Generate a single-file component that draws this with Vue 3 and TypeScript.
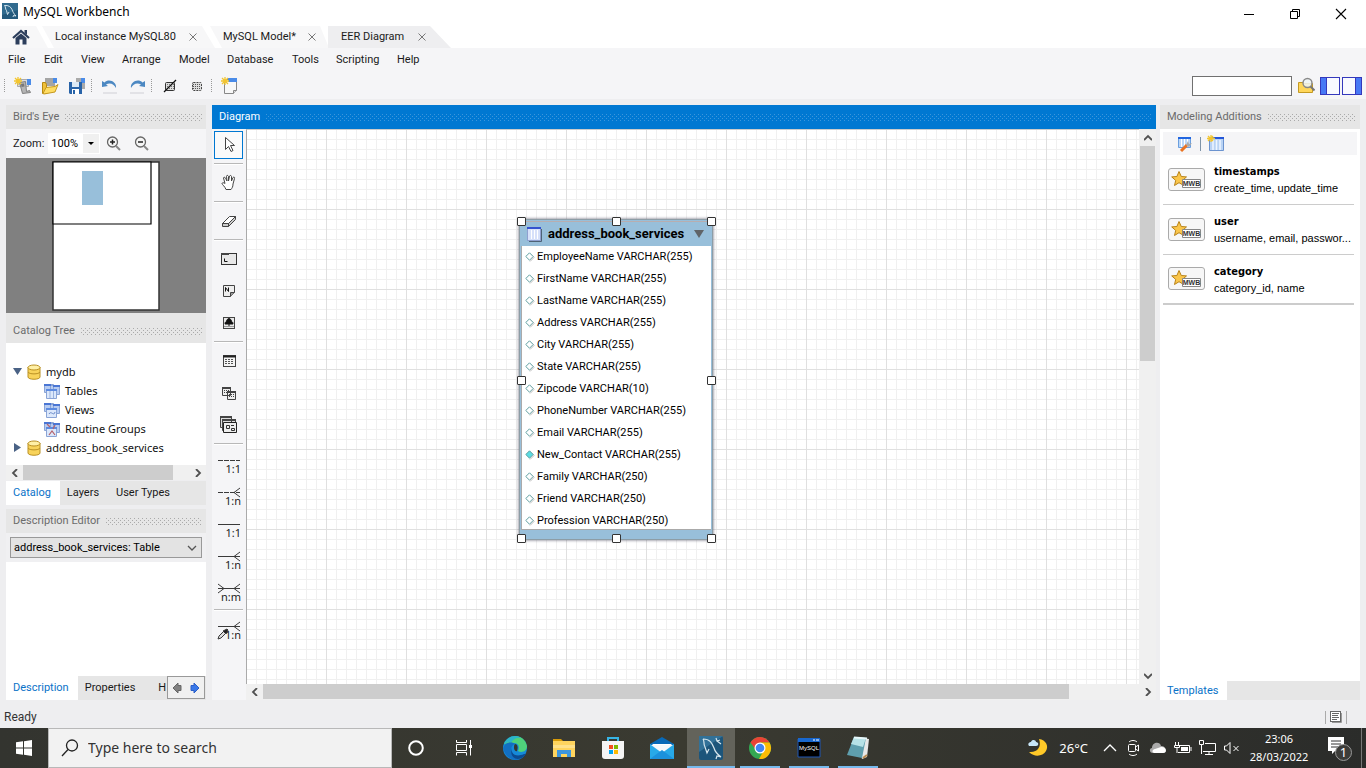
<script setup lang="ts">
import { ref } from 'vue'

interface Column { name: string; type: string; filled?: boolean }
interface Addition { title: string; detail: string }
type Tool = { id: string; label: string; group?: boolean; relation?: string; dashed?: boolean; left?: boolean; right?: boolean; pick?: boolean }

const menus: string[] = ['File', 'Edit', 'View', 'Arrange', 'Model', 'Database', 'Tools', 'Scripting', 'Help']

const columns: Column[] = [
  { name: 'EmployeeName', type: 'VARCHAR(255)' },
  { name: 'FirstName', type: 'VARCHAR(255)' },
  { name: 'LastName', type: 'VARCHAR(255)' },
  { name: 'Address', type: 'VARCHAR(255)' },
  { name: 'City', type: 'VARCHAR(255)' },
  { name: 'State', type: 'VARCHAR(255)' },
  { name: 'Zipcode', type: 'VARCHAR(10)' },
  { name: 'PhoneNumber', type: 'VARCHAR(255)' },
  { name: 'Email', type: 'VARCHAR(255)' },
  { name: 'New_Contact', type: 'VARCHAR(255)', filled: true },
  { name: 'Family', type: 'VARCHAR(250)' },
  { name: 'Friend', type: 'VARCHAR(250)' },
  { name: 'Profession', type: 'VARCHAR(250)' },
]

const additions: Addition[] = [
  { title: 'timestamps', detail: 'create_time, update_time' },
  { title: 'user', detail: 'username, email, passwor...' },
  { title: 'category', detail: 'category_id, name' },
]

const tools: Tool[] = [
  { id: 'select', label: 'Select' },
  { id: 'hand', label: 'Pan', group: true },
  { id: 'eraser', label: 'Delete', group: true },
  { id: 'layer', label: 'Layer', group: true },
  { id: 'note', label: 'Note' },
  { id: 'image', label: 'Image' },
  { id: 'table', label: 'Table', group: true },
  { id: 'view', label: 'View' },
  { id: 'routine', label: 'Routine group' },
  { id: 'r1', label: 'One to one', group: true, relation: '1:1', dashed: true },
  { id: 'r2', label: 'One to many', relation: '1:n', dashed: true, right: true },
  { id: 'r3', label: 'Identifying one to one', relation: '1:1' },
  { id: 'r4', label: 'Identifying one to many', relation: '1:n', right: true },
  { id: 'r5', label: 'Many to many', relation: 'n:m', left: true, right: true },
  { id: 'r6', label: 'Relation from columns', group: true, relation: '1:n', right: true, pick: true },
]

const handles: string[] = ['nw', 'n', 'ne', 'w', 'e', 'sw', 's', 'se']
const activeTool = ref<string>('select')
const query = ref<string>('')
const taskQuery = ref<string>('')
</script>

<template>
  <div class="app">
    <header class="titlebar">
      <svg class="logo" width="16" height="16" viewBox="0 0 32 32"><rect width="32" height="32" fill="#24597c"/><path d="M0 0h32v14L0 24z" fill="#3d7da2" opacity=".5"/><path d="M5 5c8-1 13 3 15 8 2 5 3 8 8 13l-5-1-1 3M5 5c3 3 1 7 4 10l2 8 3-5" fill="none" stroke="#e4f0f6" stroke-width="1.800"/></svg>
      <h1>MySQL Workbench</h1>
      <div class="window-buttons">
        <button aria-label="Minimize"><svg width="12" height="12"><path d="M1 6.500h10" stroke="#000"/></svg></button>
        <button aria-label="Restore"><svg width="12" height="12" fill="none" stroke="#000"><path d="M1.500 3.500h7v7h-7zM3.500 3.500v-2h7v7h-2"/></svg></button>
        <button aria-label="Close"><svg width="12" height="12"><path d="M1 1l10 10M11 1L1 11" stroke="#000" stroke-width="1.100"/></svg></button>
      </div>
    </header>

    <nav class="tabs" aria-label="Documents">
      <div class="tab home"><button aria-label="Home"><svg width="18" height="16" viewBox="0 0 18 16"><path d="M1 9l8-7 8 7" fill="none" stroke="#2c3e5c" stroke-width="2.200"/><path d="M12.500 1H15v5l-2.500-2zM3.500 9L9 4.500 14.500 9v6.500h-4v-5h-3v5h-4z" fill="#2c3e5c"/></svg></button></div>
      <div class="tab local"><button>Local instance MySQL80</button><button class="close" aria-label="Close tab"><svg width="8" height="8"><path d="M.5.5l7 7M7.500.5l-7 7" stroke="#777"/></svg></button></div>
      <div class="tab model"><button>MySQL Model*</button><button class="close" aria-label="Close tab"><svg width="8" height="8"><path d="M.5.5l7 7M7.500.5l-7 7" stroke="#777"/></svg></button></div>
      <div class="tab eer"><button>EER Diagram</button><button class="close" aria-label="Close tab"><svg width="8" height="8"><path d="M.5.5l7 7M7.500.5l-7 7" stroke="#777"/></svg></button></div>
    </nav>

    <nav class="menubar" aria-label="Main menu">
      <button v-for="m in menus" :key="m">{{ m }}</button>
    </nav>

    <div class="toolbar">
      <i class="grip"></i>
      <button aria-label="New model"><svg width="18" height="18"><path d="M3.500 2.500h11v7h-11z" fill="#ddd" stroke="#aaa"/><path d="M13 2h4v6h-4z" fill="#4a8be8"/><path d="M5.500 5.500l6-1 1 10 3-1 1 2-8 1z" fill="#b5b5b5" stroke="#808080"/><path d="M7 7l3-.5.500 3-3 .5z" fill="#777"/><path d="M4 0v8M0 4h8M1 1l6 6M7 1L1 7" stroke="#f3c52e" stroke-width="1.300"/></svg></button>
      <button aria-label="Open model"><svg width="18" height="18"><path d="M4 1h10v8H4z" fill="#a5a5a5"/><path d="M12 1h4v5h-4z" fill="#4a8be8"/><path d="M1.500 5.500h3l1 2v9h-4z" fill="#f0c03a" stroke="#b78910"/><path d="M2 16.500l3-6 9-1 3-2-3 7.500-11 2z" fill="#ffdd63" stroke="#c5981f"/></svg></button>
      <button aria-label="Save model"><svg width="18" height="18"><path d="M8 1h9v11H8z" fill="#aaa"/><path d="M13 1h4v5h-4z" fill="#4a8be8"/><path d="M1 5h13v12H2l-1-1z" fill="#2863a8"/><path d="M4 5h7v5H4z" fill="#dce9f5"/><path d="M4 12h7v5H4z" fill="#fff"/><path d="M5 13h2v4H5z" fill="#2863a8"/></svg></button>
      <i class="sep"></i>
      <button aria-label="Undo"><svg width="18" height="18"><path d="M2 16h14" stroke="#e2e2e6" stroke-width="2"/><path d="M1 4v6l6-1-2-1.500C9 5 13 7 15 11 16 5 8 1 3.500 5.500z" fill="#4c88c2"/></svg></button>
      <button aria-label="Redo"><svg width="18" height="18"><path d="M2 16h14" stroke="#e2e2e6" stroke-width="2"/><path d="M17 4v6l-6-1 2-1.500C9 5 5 7 3 11 2 5 10 1 14.500 5.500z" fill="#4c88c2"/></svg></button>
      <i class="sep"></i>
      <button aria-label="Toggle grid"><svg width="14" height="14"><rect x="2.500" y="3.500" width="9" height="8" rx="1" fill="#ddd" stroke="#333"/><path d="M4 5.500h7M4 7.500h7M4 9.500h7" stroke="#777" stroke-dasharray="1 1"/><path d="M1 13L13 1" stroke="#111" stroke-width="1.200"/></svg></button>
      <button aria-label="Align to grid"><svg width="14" height="14"><rect x="2.500" y="3.500" width="9" height="8" rx="1" fill="#ddd" stroke="#444" stroke-dasharray="2 1"/><path d="M3 5.500h8M3 7.500h8M3 9.500h8" stroke="#555" stroke-dasharray="1 1"/></svg></button>
      <i class="sep"></i>
      <button aria-label="New diagram"><svg width="18" height="18"><path d="M3.500 2.500h12v11l-3 3h-9z" fill="#f8f8f8" stroke="#888"/><path d="M7 1h9v4H7z" fill="#4a8be8"/><path d="M12.500 16.500v-3h3" fill="#ddd" stroke="#888"/><path d="M4 0v8M0 4h8M1 1l6 6M7 1L1 7" stroke="#f3c52e" stroke-width="1.300"/></svg></button>
      <input v-model="query" class="search" type="text" aria-label="Search">
      <button aria-label="Find"><svg width="18" height="18"><path d="M1.500 5.500h5l1 1h8v9h-14z" fill="#ffd65a" stroke="#c49a23"/><circle cx="10.500" cy="6" r="4.500" fill="#eef4f6" fill-opacity=".85" stroke="#888" stroke-width="1.400"/><path d="M13.500 9.500l4 4" stroke="#777" stroke-width="2"/></svg></button>
      <button class="side" aria-label="Toggle left sidebar"><svg width="20" height="18"><rect x=".5" y=".5" width="19" height="17" fill="#f8f9ff" stroke="#3438bc"/><path d="M1 1h5v16H1z" fill="#4778f5"/><path d="M6.500 1v16" stroke="#3438bc"/></svg></button>
      <button class="side" aria-label="Toggle right sidebar"><svg width="20" height="18"><rect x=".5" y=".5" width="19" height="17" fill="#f8f9ff" stroke="#3438bc"/><path d="M14 1h5v16h-5z" fill="#4778f5"/><path d="M13.500 1v16" stroke="#3438bc"/></svg></button>
    </div>

    <main class="workspace">
      <aside class="left">
        <h2 class="head">Bird's Eye<i class="dots"></i></h2>
        <div class="zoom">
          <label for="zoom">Zoom:</label>
          <span class="combo">
            <select id="zoom"><option>100%</option><option>50%</option></select>
            <svg width="16" height="19"><path d="M0 0h16v19H0z" fill="#f0f0f0"/><path d="M5 8h6l-3 3z" fill="#000"/></svg>
          </span>
          <button aria-label="Zoom in"><svg width="16" height="16"><circle cx="6.500" cy="6" r="5" fill="#f6f6f6" stroke="#666" stroke-width="1.300"/><path d="M4 6h5M6.500 3.500v5" stroke="#222" stroke-width="1.500"/><path d="M10 10l4 4" stroke="#888" stroke-width="2"/></svg></button>
          <button aria-label="Zoom out"><svg width="16" height="16"><circle cx="6.500" cy="6" r="5" fill="#f6f6f6" stroke="#666" stroke-width="1.300"/><path d="M4 6h5" stroke="#222" stroke-width="1.500"/><path d="M10 10l4 4" stroke="#888" stroke-width="2"/></svg></button>
        </div>
        <div class="overview">
          <svg width="108" height="150"><rect x="1" y="1" width="106" height="148" fill="#fff" stroke="#333" stroke-width="1.500"/><path d="M1 1h98v62H1z" fill="#fff" stroke="#000" stroke-width="1.200"/><rect x="30" y="10" width="21" height="34" fill="#98bfda"/></svg>
        </div>
        <h2 class="head second">Catalog Tree<i class="dots"></i></h2>
        <ul class="tree">
          <li><svg width="11" height="9"><path d="M1 1h9l-4.500 7z" fill="#4a6285"/></svg><svg class="db" width="14" height="16"><path d="M1 3v10c0 3 12 3 12 0V3" fill="#f8d35a" stroke="#ba9125"/><ellipse cx="7" cy="3.500" rx="6" ry="2.500" fill="#fff0a6" stroke="#ba9125"/><path d="M1 8c1 2.500 11 2.500 12 0" fill="none" stroke="#ba9125"/></svg>mydb</li>
          <li v-for="n in ['Tables', 'Views', 'Routine Groups']" :key="n" class="child">
            <svg width="16" height="16"><path d="M.5 1.500h9v8h-9zM6.500 2.500h9v9h-9z" fill="#b7ccf2" stroke="#8aa4d6"/><path d="M0 1h7v2H0zM9 2h7v2H9z" fill="#4a76d4"/><path d="M2.500 7.500h10v8h-10z" fill="#dce8fb" stroke="#8aa4d6"/><path d="M2 6h11v2H2z" fill="#5d8be0"/><path v-if="n === 'Tables'" d="M6 8v7M9.500 8v7" stroke="#9ab3df"/><path v-else-if="n === 'Views'" d="M5 12c2-4 5 3 6-2" fill="none" stroke="#6889c9"/><path v-else d="M3 3l3 3M11 4l-2 4M5 14l3-4 3 4" fill="none" stroke="#b5616b" stroke-width="1.200"/></svg>{{ n }}
          </li>
          <li><svg width="11" height="11"><path d="M2 1v9l7-4.500z" fill="#4a6285"/></svg><svg class="db" width="14" height="16"><path d="M1 3v10c0 3 12 3 12 0V3" fill="#f8d35a" stroke="#ba9125"/><ellipse cx="7" cy="3.500" rx="6" ry="2.500" fill="#fff0a6" stroke="#ba9125"/><path d="M1 8c1 2.500 11 2.500 12 0" fill="none" stroke="#ba9125"/></svg>address_book_services</li>
        </ul>
        <div class="hscroll"><button aria-label="Scroll left"><svg width="8" height="8"><path d="M6 0L2 4l4 4" fill="none" stroke="#505050" stroke-width="1.800"/></svg></button><div class="track"><i class="thumb"></i></div><button aria-label="Scroll right"><svg width="8" height="8"><path d="M2 0l4 4-4 4" fill="none" stroke="#505050" stroke-width="1.800"/></svg></button></div>
        <div class="panel-tabs"><button class="on">Catalog</button><button>Layers</button><button>User Types</button></div>
        <h2 class="head third">Description Editor<i class="dots"></i></h2>
        <div class="object-pick">
          <span class="combo wide"><select aria-label="Selected object"><option>address_book_services: Table</option></select><svg width="18" height="10"><path d="M5 3l4 4 4-4" fill="none" stroke="#555" stroke-width="1.300"/></svg></span>
        </div>
        <textarea class="description" aria-label="Description"></textarea>
        <div class="panel-tabs bottom"><button class="on">Description</button><button>Properties</button><button class="cut">H</button>
          <span class="pager"><button aria-label="Previous tab"><svg width="10" height="12"><path d="M9 3.500v5H6V11L1 6l5-5v2.500z" fill="#808080" stroke="#666"/></svg></button><button aria-label="Next tab"><svg width="10" height="12"><path d="M1 3.500v5h3V11l5-5-5-5v2.500z" fill="#3877e8" stroke="#2b5fc7"/></svg></button></span>
        </div>
      </aside>

      <section class="center">
        <h2 class="head blue">Diagram<i class="dots"></i></h2>
        <div class="toolbox">
          <template v-for="t in tools" :key="t.id">
            <hr v-if="t.group">
            <button :class="{ active: activeTool === t.id }" :aria-label="t.label" @click="activeTool = t.id">
              <svg v-if="t.relation" width="30" height="30" viewBox="0 0 30 30" fill="none" stroke="#3a3a3a">
                <path d="M4 12.500h22" :stroke-dasharray="t.dashed ? '5 1' : undefined"/>
                <path v-if="t.right" d="M26 8l-6 4.500 6 4.500"/><path v-if="t.left" d="M4 8l6 4.500L4 17"/>
                <path v-if="t.pick" d="M4 25l1-3 5-5 2 2-5 5z" fill="#ddd"/><path v-if="t.pick" d="M9 17l3 3 2-4-1-1z" fill="#222"/>
                <text x="27" y="25" text-anchor="end" fill="#1c1c1c" stroke="none">{{ t.relation }}</text>
              </svg>
              <svg v-else width="20" height="20" viewBox="0 0 20 20" fill="none" stroke="#444">
                <path v-if="t.id === 'select'" d="M6.500 2.500v12l3-3 2.500 5 2-1-2.500-5h4z" fill="#fff"/>
                <path v-else-if="t.id === 'hand'" d="M7 16.500c-1-3-4-5-4-6s2-1 3 0L4.500 5c0-1 1.500-1 2 0L8 8l-.5-4.500c0-1.500 1.500-1.500 2 0V8l1-5c.5-1 2-.5 2 .5V8l1.500-3.500c1-1 2 0 1.500 1L14 11c0 3-1 4-2 5.500z" fill="#fff"/>
                <g v-else-if="t.id === 'eraser'"><path d="M3.500 12.500l7-7h6l-5 7z" fill="#fff"/><path d="M3.500 12.500v3h6l7-7v-3l-7 7z" fill="#ccc"/><path d="M3.500 12.500h6v3" /></g>
                <g v-else-if="t.id === 'layer'"><rect x="2.500" y="4.500" width="15" height="11" fill="#e8e8e8" stroke="#333"/><path d="M2 5h8" stroke-width="2"/><path d="M5.500 9.500v3h3" stroke="#111"/></g>
                <g v-else-if="t.id === 'note'"><path d="M4.500 4.500h11v7l-4 4h-7z" fill="#eee"/><path d="M11.500 15.500v-4h4" fill="#999"/><path d="M6.500 10.500v-4l3 4v-4" stroke="#111"/></g>
                <g v-else-if="t.id === 'image'"><rect x="4.500" y="4.500" width="11" height="11" fill="#e8e8e8"/><path d="M10 14v-3M6 11c0-3 2-2 2-4 1-2 3-2 4 0 0 2 2 1 2 4z" fill="#111" stroke="#111"/><path d="M5 13.500h10" stroke="#999"/></g>
                <g v-else-if="t.id === 'table'"><rect x="4.500" y="4.500" width="12" height="11" fill="#f5f5f5"/><path d="M4 5.500h13" stroke="#222" stroke-width="2"/><path d="M6 8.500h9M6 10.500h9M6 12.500h9" stroke-dasharray="2 1" stroke="#555"/></g>
                <g v-else-if="t.id === 'view'"><path d="M3.500 4.500h8v8h-8zM8.500 8.500h8v8h-8z" fill="#eee"/><path d="M3 5h9M8 9h9" stroke-width="2"/><path d="M5 7.500h6M5 9.500h3M10 11.500h6M10 13.500h6" stroke-dasharray="1 1"/></g>
                <g v-else><path d="M1.500 1.500h11v11h-11zM3.500 4.500h13v11h-13z" fill="#ddd"/><path d="M1 2h12M3 5h14" stroke-width="2"/><path d="M4.500 7.500h13v10h-13z" fill="#eee" stroke="#222"/><path d="M7.500 10.500h3v3h-3zM12.500 13.500h3v2h-3zM12 10.500h3" stroke="#333"/></g>
              </svg>
            </button>
          </template>
        </div>
        <div class="canvas">
          <article class="entity">
            <header><svg width="15" height="15"><rect x=".5" y=".5" width="13" height="13" fill="#d7e1fa" stroke="#8fa0d0"/><path d="M0 0h14v2H0z" fill="#3453cf"/><path d="M4.500 3v9M7.500 3v9M10.500 3v9" stroke="#fff"/><path d="M14.500 2v12.500H2" stroke="#4e6276" fill="none"/></svg><strong>address_book_services</strong><svg class="fold" width="10" height="8"><path d="M0 0h10L5 8z" fill="#606468"/></svg></header>
            <ul>
              <li v-for="c in columns" :key="c.name"><svg width="10" height="10"><path d="M5 1.500l4 4-4 4" fill="none" stroke="#bbb"/><path d="M4.500.8l3.700 3.700-3.700 3.700L.8 4.500z" :fill="c.filled ? '#5bdbe2' : '#fff'" stroke="#5f9ea0"/></svg>{{ c.name }} {{ c.type }}</li>
            </ul>
            <i v-for="h in handles" :key="h" class="handle" :class="h"></i>
          </article>
        </div>
        <div class="vscroll"><button aria-label="Scroll up"><svg width="8" height="8"><path d="M0 6l4-4 4 4" fill="none" stroke="#505050" stroke-width="1.800"/></svg></button><div class="track"><i class="thumb"></i></div><button aria-label="Scroll down"><svg width="8" height="8"><path d="M0 2l4 4 4-4" fill="none" stroke="#505050" stroke-width="1.800"/></svg></button></div>
        <div class="hscroll"><button aria-label="Scroll left"><svg width="8" height="8"><path d="M6 0L2 4l4 4" fill="none" stroke="#505050" stroke-width="1.800"/></svg></button><div class="track"><i class="thumb"></i></div><button aria-label="Scroll right"><svg width="8" height="8"><path d="M2 0l4 4-4 4" fill="none" stroke="#505050" stroke-width="1.800"/></svg></button></div>
      </section>

      <aside class="right">
        <h2 class="head">Modeling Additions<i class="dots"></i></h2>
        <div class="additions">
          <div class="add-tools">
            <button aria-label="Edit template"><svg width="18" height="18"><path d="M2.500 2.500h12v10h-12z" fill="#bbd7f8" stroke="#6b9fdf"/><path d="M2 2h13v2H2z" fill="#2166e0"/><path d="M5.500 4v8M8.500 4v8M11.500 4v8" stroke="#fff"/><path d="M5 16l6-6" stroke="#ea7322" stroke-width="3"/><path d="M10 10l2-4 1 3 3-1-3 4z" fill="#aaa"/></svg></button>
            <i></i>
            <button aria-label="New table from template"><svg width="18" height="18"><path d="M2.500 2.500h14v13h-14z" fill="#b9d3f4" stroke="#6b93cf"/><path d="M7 2h10v2H7z" fill="#2456d8"/><path d="M6 5v10M9.500 5v10M13 5v10" stroke="#eef6ff" stroke-width="1.500"/><path d="M4 0v7M0 3.500h8M1 1l5 5M6 1L1 6" stroke="#f3c52e" stroke-width="1.300"/></svg></button>
          </div>
          <ul>
            <li v-for="a in additions" :key="a.title">
              <svg width="37" height="24"><rect x=".5" y=".5" width="36" height="22" rx="2.500" fill="#f7f7f7" stroke="#aaa"/><path d="M11 3.500l2.300 5 5.200.4-4 3.500 1.300 5.100-4.800-2.800-4.500 2.800 1.200-5.100-4-3.500 5.200-.4z" fill="#fac64b" stroke="#b88318"/><path d="M14.500 11.500h18v8h-18z" fill="#fff" stroke="#888"/><text x="23.500" y="18" text-anchor="middle">MWB</text></svg>
              <p><strong>{{ a.title }}</strong><span>{{ a.detail }}</span></p>
            </li>
          </ul>
        </div>
        <div class="panel-tabs templates"><button class="on">Templates</button></div>
      </aside>
    </main>

    <footer class="status"><span>Ready</span><button aria-label="Output"><svg width="12" height="12"><path d="M11.500 2v9.500H2" stroke="#999" fill="none"/><rect x=".5" y=".5" width="10" height="10" fill="#fff" stroke="#666"/><path d="M2 2.500h7M2 4.500h6M2 6.500h7M2 8.500h5" stroke="#666"/></svg></button></footer>

    <footer class="taskbar">
      <button class="cell" aria-label="Start"><svg width="16" height="16" fill="#fff"><path d="M0 2.300L7 1.300v6.200H0zM8 1.200L16 0v7.500H8zM0 8.500h7v6.200l-7-1zM8 8.500h8V16l-8-1.200z"/></svg></button>
      <label class="find"><svg width="18" height="18" fill="none" stroke="#222" stroke-width="1.300"><circle cx="11" cy="6.500" r="5.500"/><path d="M7 10.500L1 17"/></svg><input v-model="taskQuery" type="text" placeholder="Type here to search" aria-label="Type here to search"></label>
      <button class="cell" aria-label="Cortana"><svg width="16" height="16"><circle cx="8" cy="8" r="6.800" fill="none" stroke="#fff" stroke-width="2"/></svg></button>
      <button class="cell" aria-label="Task view"><svg width="18" height="16" fill="none" stroke="#fff"><path d="M1.500 0v2.500h10V0M1.500 4.500h10v6h-10zM1.500 15.500v-3h10v3M15.500 0v15.500"/><path d="M14 5h3v3h-3z" fill="#fff" stroke="none"/></svg></button>
      <div class="apps">
        <button class="cell" aria-label="Edge"><svg width="24" height="24"><circle cx="12" cy="12" r="12" fill="#1689d8"/><path d="M1 8C5-2 21-3 24 10c0 6-6 7-9 5 2-5 0-8-4-8-5-1-8 1-10 1z" fill="#4fd17b"/><path d="M1 8C4 0 13-2 18 2c-6-1-9 3-10 5C5 6 3 7 1 8z" fill="#2bb5c8"/><path d="M0 13c1-7 9-8 12-5-5 1-5 9 0 12 4 2 7 1 10-1-4 6-11 6-15 3-4-2-5-5-7-9z" fill="#126fc2"/><path d="M9 11c-2 6 3 11 12 7l2 0C17 27 5 23 9 11z" fill="#0b4b91"/><path d="M12 8c3 0 3 4 2 7-1 1-3-1-3-3s0-3 1-4z" fill="#35362f"/></svg></button>
        <button class="cell" aria-label="Explorer"><svg width="24" height="20"><path d="M1 1h8l2 2H1z" fill="#d99b08"/><path d="M1 3h22v16H1z" fill="#ffd45e"/><path d="M1 7h22v3H1z" fill="#ffe18a"/><path d="M5 12h14v7h-4v-3H9v3H5z" fill="#3e96de"/></svg></button>
        <button class="cell" aria-label="Store"><svg width="24" height="24"><path d="M7 6V2h10v4" fill="none" stroke="#37b5e6" stroke-width="2"/><path d="M1 5h22v15q0 3-3 3H4q-3 0-3-3z" fill="#f5f5f5"/><path d="M8 9h4v4H8z" fill="#f25022"/><path d="M13 9h4v4h-4z" fill="#7fba00"/><path d="M8 14h4v4H8z" fill="#00a4ef"/><path d="M13 14h4v4h-4z" fill="#ffb900"/></svg></button>
        <button class="cell" aria-label="Mail"><svg width="24" height="24"><path d="M0 8l12-7 12 7v15H0z" fill="#0869b8"/><path d="M2 8h20L12 17z" fill="#fff"/><path d="M0 8l12 8L24 8v15H0z" fill="#28a9e8"/><path d="M1 9h22l-11 8z" fill="#f4f8fc"/><path d="M0 23l12-9 12 9z" fill="#1c91dc"/></svg></button>
        <button class="cell current" aria-label="MySQL Workbench"><svg width="24" height="24"><rect width="24" height="24" rx="2" fill="#1c557b"/><path d="M0 0h24L0 16z" fill="#327198"/><path d="M4 3c7 0 9 4 11 9 1 4 3 6 7 9l-4-1-1 3M4 3c2 3 0 5 2 8l2 6 2-4M17 2l1 3 3-1M18 5l4 3" fill="none" stroke="#d7e6ed" stroke-width="1.200"/></svg></button>
        <button class="cell open" aria-label="Chrome"><svg width="24" height="24"><circle cx="12" cy="12" r="11" fill="#34a853"/><path d="M2.500 6.500a11 11 0 0 1 19 0H12L8 14z" fill="#ea4335"/><path d="M21.500 6.500A11 11 0 0 1 11 23l5-9c1-3-1-6-4-7.500z" fill="#fbbc05"/><circle cx="12" cy="12" r="5.500" fill="#fff"/><circle cx="12" cy="12" r="4.300" fill="#4285f4"/></svg></button>
        <button class="cell open" aria-label="MySQL client"><svg width="24" height="20"><path d="M1 1h22v18H1z" fill="#000" stroke="#1f57b6"/><path d="M1 0h22v4H1z" fill="#1867ce"/><path d="M16 2h2M19 2h3" stroke="#fff"/><text x="2" y="12">MySQL</text></svg></button>
        <button class="cell open" aria-label="Notepad"><svg width="24" height="24"><path d="M9 1l14 2-2 18-5 2z" fill="#e8e8e8"/><path d="M8 1l12 1-4 20-15-3z" fill="#5f9fae"/><path d="M8 1l12 1-3 9L5 8z" fill="#b7e2e7"/><path d="M8 1.500l13 1" stroke="#e6f7fa" stroke-width="2"/><path d="M17 22l4-3" stroke="#b98a50" stroke-width="2"/></svg></button>
      </div>
      <div class="tray">
        <svg width="22" height="22"><path d="M12 2c7 1 10 7 7 12s-11 7-17 1c8 1 13-5 10-13z" fill="#ffc928"/><path d="M2 9c-2-3 1-4 2-4 1-3 5-2 5 0 3 0 3 4 0 4z" fill="#c8e6f8"/></svg>
        <span class="temp">26°C</span>
        <button aria-label="Hidden icons"><svg width="14" height="10"><path d="M1 8l6-6 6 6" fill="none" stroke="#fff" stroke-width="1.300"/></svg></button>
        <svg width="16" height="18" fill="none" stroke="#fff"><rect x="2.500" y="5.500" width="7" height="7" rx="1"/><path d="M9.500 8l3-2v6l-3-2M3 3c2-2 6-2 8 0M3 15c2 2 6 2 8 0"/></svg>
        <svg width="18" height="12"><path d="M4 11c-4 0-4-5-1-5 0-6 8-7 9-2 5-1 7 7 2 7z" fill="#aaa"/><path d="M5 11c-3-1-1-4 1-4l6-2c5-1 7 6 2 6z" fill="#fff"/></svg>
        <svg width="18" height="14" fill="none" stroke="#fff"><path d="M5 4.500h10.500v7H4M17 6v4"/><path d="M7 6h7v4H7z" fill="#fff" stroke="none"/><path d="M1.500 1v3M4.500 1v3M.5 4.500h5v2h-5zM3 7v5"/></svg>
        <svg width="18" height="16" fill="none" stroke="#fff"><path d="M6 3.500h10.500v8H4M10 12v3M6 14.500h8M.5.500h4v4h-4zM2.500 5v9"/></svg>
        <svg width="16" height="14" fill="none" stroke="#fff"><path d="M.5 5h2L6 1.500v11L2.500 9h-2zM9.500 5l5 5M14.500 5l-5 5"/></svg>
        <time>23:06<br>28/03/2022</time>
        <button class="notice" aria-label="Notifications"><svg width="28" height="28"><path d="M2 3h16v14H9l-3 3v-3H2z" fill="#fff"/><path d="M5 7h10M5 10h10M5 13h7" stroke="#333"/><circle cx="17.500" cy="18.500" r="8" fill="#3c3c39" stroke="#999"/><text x="17.500" y="23" text-anchor="middle">1</text></svg></button>
        <i class="peek"></i>
      </div>
    </footer>
  </div>
</template>

<style>
body { margin: 0; }
</style>

<style scoped>
* { box-sizing: border-box; }
.app { min-height: 100vh; display: flex; flex-direction: column; background: #eeeef0; color: #1a1a1a; font: 11px/16px Roboto, "Liberation Sans", sans-serif; overflow: hidden; }
button { border: 0; padding: 0; background: none; font: inherit; color: inherit; display: flex; align-items: center; justify-content: center; white-space: nowrap; }
ul, h1, h2, p { margin: 0; padding: 0; list-style: none; font-size: 11px; font-weight: 400; }
svg { flex: none; }
.titlebar { height: 26px; background: #fff; display: flex; align-items: flex-start; padding: 3px 0 0 2px; gap: 5px; }
.titlebar h1 { line-height: 18px; font-size: 12px; color: #000; font-family: "Noto Sans", sans-serif; }
.window-buttons { display: flex; margin-left: auto; padding-right: 2px; }
.window-buttons button { width: 46px; height: 22px; }
.tabs { height: 22px; background: #fff; display: flex; }
.tab { background: #f7f7f8; display: flex; align-items: center; justify-content: space-between; }
.home { width: 48px; padding-left: 12px; clip-path: polygon(0 0, 36px 0, 48px 100%, 0 100%); }
.local { width: 173px; margin-left: -6px; padding: 0 18px 0 13px; clip-path: polygon(0 0, 160px 0, 100% 100%, 12px 100%); }
.model { width: 119px; margin-left: -5px; padding: 0 13px; clip-path: polygon(0 0, 110px 0, 100% 100%, 12px 100%); }
.eer { width: 123px; margin-left: -1px; padding: 0 25px 0 13px; background: #eeeef0; clip-path: polygon(0 0, 102px 0, 100% 100%, 0 100%); }
.menubar { height: 24px; padding-left: 8px; background: #f5f5f7; display: grid; grid-template-columns: 36px 37px 41px 57px 48px 65px 44px 61px 40px; }
.menubar button { justify-content: flex-start; }
.toolbar { height: 27px; padding: 0 3px; background: #f5f5f7; display: flex; align-items: center; }
.toolbar button { width: 27px; height: 27px; }
.toolbar .side { width: 22px; }
.grip, .sep { width: 6px; height: 15px; background: linear-gradient(#f5f5f7 50%, transparent 50%) 0 0 / 6px 2px, linear-gradient(90deg, #999 1px, transparent 1px) 1px 0; }
.search { width: 100px; height: 20px; margin-left: auto; border: 1px solid #707070; background: #fff; }
.workspace { flex: 1; margin-top: 6px; padding: 0 6px; display: grid; grid-template-columns: 200px minmax(0, 1fr) 200px; }
.left { display: flex; flex-direction: column; min-width: 0; }
.head { height: 24px; padding: 0 4px 0 7px; display: flex; align-items: center; gap: 6px; background: #e6e6e6; color: #6b6b6b; white-space: nowrap; }
.head.second { height: 30px; padding-top: 6px; }
.head.third { margin-top: 4px; }
.dots { flex: 1; height: 7px; --dot: #aaa; background: conic-gradient(at 1px 1px, transparent 270deg, var(--dot) 0) 0 0 / 4px 4px, conic-gradient(at 1px 1px, transparent 270deg, var(--dot) 0) 2px 2px / 4px 4px; }
.zoom { height: 29px; display: flex; align-items: center; padding-left: 7px; background: #f5f5f7; }
.combo { display: grid; align-items: center; justify-items: end; }
.combo > * { grid-area: 1 / 1; }
.combo > svg { pointer-events: none; margin-right: 1px; }
select { appearance: none; border: 0; border-radius: 0; padding: 0; font: inherit; color: #000; width: 100%; }
.zoom .combo { width: 52px; margin-left: 4px; }
.zoom select { height: 21px; padding-left: 3px; background: #fff; }
.zoom button { width: 28px; height: 24px; }
.overview { height: 155px; background: #808080; display: flex; align-items: center; padding-left: 46px; }
.tree { height: 122px; padding: 19px 0 0 6px; background: #fff; font: 12px/19px "Noto Sans", sans-serif; }
.tree li { height: 19px; display: flex; align-items: center; white-space: nowrap; color: #111; font-size: 11px; }
.db { margin: 0 5px 0 4px; }
.tree .child { padding-left: 32px; gap: 5px; }
.hscroll { height: 15px; display: flex; background: #f0f0f0; }
.hscroll button { width: 17px; }
.track { flex: 1; display: flex; }
.thumb { background: #cdcdcd; }
.left .thumb { width: 150px; }
.panel-tabs { height: 24px; margin-top: 1px; background: #e6e6e6; display: flex; }
.panel-tabs button { padding: 0 9px 0 7px; }
.panel-tabs button + button { padding: 0 9px; padding-left: 7px; margin-right: 1px; }
.panel-tabs .on { background: #fff; color: #0a72c8; }
.object-pick { padding: 4px; background: #f0f0f2; }
.wide select { height: 21px; padding-left: 3px; background: #e3e3e3; border: 1px solid #999; }
.description { flex: 1; border: 0; resize: none; background: #fff; outline: 0; width: 100%; }
.left .bottom { margin-top: 0; position: relative; overflow: hidden; }
.panel-tabs.bottom .cut { padding-left: 13px; flex: none; }
.pager { position: absolute; right: 1px; top: 0; display: flex; border: 1px solid #999; background: #f0f0f0; width: 38px; height: 23px; }
.panel-tabs .pager button { flex: 1; padding: 0; margin: 0; }
.center { margin: 0 4px 0 6px; display: grid; grid-template: 24px minmax(0, 1fr) 16px / 34px minmax(0, 1fr) 17px; }
.center .head { grid-column: 1 / -1; }
.head.blue { background: #0078d2; color: #fff; }
.blue .dots { --dot: #3c96dc; }
.toolbox { grid-row: 2 / 4; background: #f5f5f7; display: flex; flex-direction: column; padding: 2px 3px 0 2px; }
.toolbox button { height: 28px; margin-bottom: 4px; border: 1px solid transparent; }
.toolbox .active { border-color: #0078d2; background: #fafafa; }
.toolbox hr { width: 100%; height: 2px; margin: 0 0 4px; border: 0; border-top: 1px solid #b8b8b8; background: #fff; }
.toolbox text { font: 11px "Noto Sans", sans-serif; }
.canvas { position: relative; overflow: hidden; border-left: 1px solid #aaa; border-top: 1px solid #ccc; background-color: #fff; background-image: linear-gradient(90deg, #e0e0e0 1px, transparent 1px), linear-gradient(#e0e0e0 1px, transparent 1px), linear-gradient(90deg, #f0f0f0 1px, transparent 1px), linear-gradient(#f0f0f0 1px, transparent 1px); background-size: 80px 80px, 80px 80px, 10px 10px, 10px 10px; background-position: -1px -1px; }
.entity { position: absolute; left: 272px; top: 89px; width: 194px; height: 321px; padding: 1px 1px 10px; background: #98bfda; border: 1px solid #8d9da6; box-shadow: 0 0 3px #667; }
.entity header { height: 25px; display: flex; align-items: center; padding: 0 7px 0 6px; border-top: 1px solid #b8aeb0; }
.entity strong { margin-left: 6px; font: bold 13px/20px Roboto, sans-serif; color: #000; white-space: nowrap; }
.fold { margin-left: auto; }
.entity ul { background: #fff; border: 1px solid #aaa; border-width: 0 0 1px 1px; height: 284px; overflow: hidden; }
.entity li { height: 22px; padding-left: 3px; display: flex; align-items: center; gap: 2px; font-size: 11px; color: #000; white-space: nowrap; }
.handle { position: absolute; width: 9px; height: 9px; border: 1px solid #333; border-radius: 1px; background: #fff; }
.nw, .n, .ne { top: -3px; } .w, .e { top: 156px; } .sw, .s, .se { bottom: -4px; }
.nw, .w, .sw { left: -3px; } .n, .s { left: 92px; } .ne, .e, .se { right: -4px; }
.vscroll { background: #f0f0f0; display: flex; flex-direction: column; padding: 0 1px; }
.vscroll button { height: 17px; }
.vscroll .thumb { width: 100%; height: 215px; }
.center .hscroll { grid-column: 2 / 4; height: 16px; padding-bottom: 1px; }
.center .hscroll .thumb { width: 92%; }
.right { display: flex; flex-direction: column; background: #fff; }
.additions { flex: 1; padding: 3px 3px 0; }
.add-tools { height: 23px; padding-left: 9px; background: #f5f5f7; display: flex; align-items: center; gap: 2px; }
.add-tools button { width: 26px; }
.add-tools i { width: 1px; height: 14px; background: #7e93a8; }
.additions li { height: 50px; margin-right: 3px; padding-left: 5px; display: flex; align-items: center; gap: 9px; border-bottom: 1px solid #ccc; color: #000; }
.additions li:last-child { border-bottom-width: 2px; }
.additions p { display: flex; flex-direction: column; white-space: nowrap; padding-top: 1px; }
.additions strong { font: bold 11px/16px "DejaVu Sans Condensed", "DejaVu Sans", sans-serif; }
.additions p span { font: 11px/16px "Liberation Sans", sans-serif; }
.additions text { font: bold 7px "Liberation Sans", sans-serif; fill: #333; }
.templates { height: 19px; margin-top: 0; }
.status { height: 28px; padding: 6px 19px 0 4px; display: flex; align-items: center; justify-content: space-between; color: #333; font-size: 12px; }
.status button { width: 22px; height: 13px; border: solid #aaa; border-width: 0 1px; }
.taskbar { height: 40px; display: flex; background: linear-gradient(90deg, #33342f, #3a3a31 50%, #2b2c2a); color: #fff; font-family: "Noto Sans", sans-serif; }
.cell { width: 48px; height: 40px; flex: none; }
.find { flex: 0 1 344px; display: flex; align-items: center; gap: 9px; padding-left: 12px; background: #f2f2f2; border: 1px solid #b8b8b8; }
.find input { flex: 1; min-width: 0; border: 0; outline: 0; padding: 0; background: none; font: 14px/20px "Noto Sans", sans-serif; }
.find input::placeholder { color: #333; opacity: 1; }
.apps { display: flex; gap: 1px; margin-left: 3px; }
.apps text { font: 6px "Liberation Sans", sans-serif; fill: #fff; }
.current { background: #63635b; border-bottom: 2px solid #76b9ed; padding-top: 2px; }
.open { background: linear-gradient(#76b9ed, #76b9ed) 50% 100% / 40px 2px no-repeat; }
.tray { margin-left: auto; display: flex; align-items: center; padding-right: 4px; gap: 7px; }
.temp { font-size: 13px; margin: 0 8px 0 3px; }
.tray time { font-size: 11px; line-height: 18px; text-align: center; width: 60px; margin-left: 2px; }
.tray button { margin-right: 2px; }
.tray .notice { margin: 0 0 0 10px; }
.notice text { font: 13px "Noto Sans", sans-serif; fill: #fff; }
.peek { width: 1px; height: 40px; background: #777; }
</style>
